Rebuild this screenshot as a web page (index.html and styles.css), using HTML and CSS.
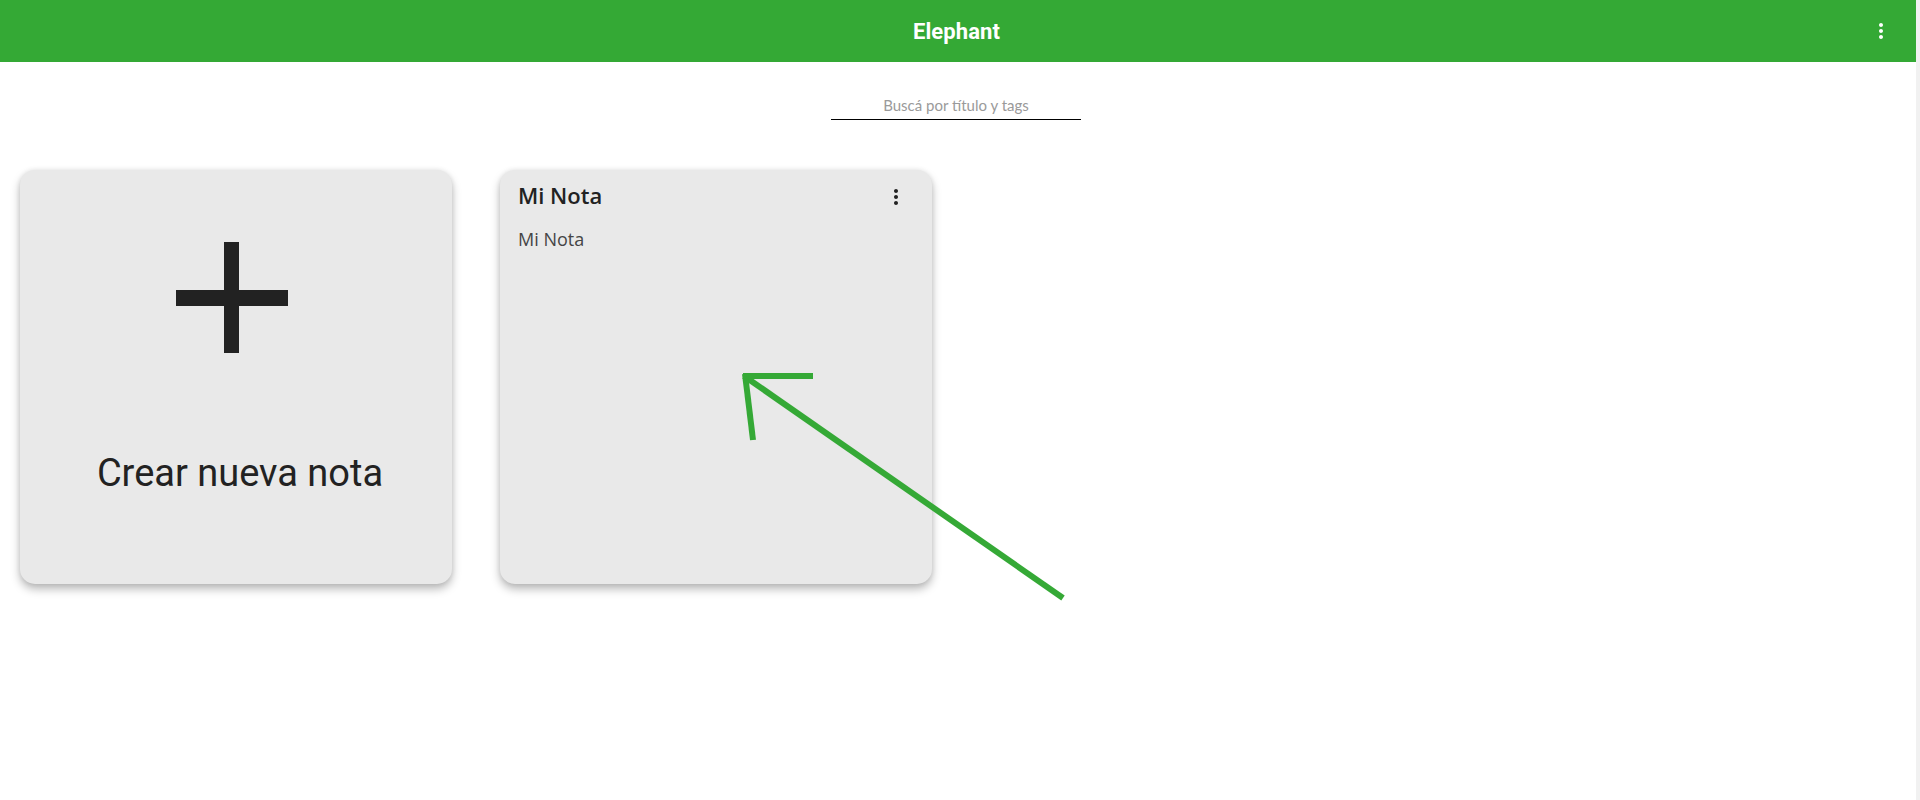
FILE: index.html
```html
<!DOCTYPE html>
<html lang="es">
<head>
<meta charset="utf-8">
<title>Elephant</title>
<link rel="stylesheet" href="styles.css">
</head>
<body>
<div class="app">
  <header class="topbar">
    <div class="topbar-title">Elephant</div>
    <button class="icon-btn topbar-menu" aria-label="Menú">
      <svg viewBox="0 0 24 24" width="24" height="24"><path fill="currentColor" d="M12 8c1.1 0 2-.9 2-2s-.9-2-2-2-2 .9-2 2 .9 2 2 2zm0 2c-1.1 0-2 .9-2 2s.9 2 2 2 2-.9 2-2-.9-2-2-2zm0 6c-1.1 0-2 .9-2 2s.9 2 2 2 2-.9 2-2-.9-2-2-2z"/></svg>
    </button>
  </header>

  <main class="content">
    <div class="search">
      <input class="search-input" type="text" placeholder="Buscá por título y tags">
    </div>

    <section class="notes">
      <div class="card card-new">
        <svg class="plus" viewBox="0 0 112 111" width="112" height="111">
          <rect x="48" y="0" width="15" height="111" fill="#222"/>
          <rect x="0" y="48" width="112" height="16" fill="#222"/>
        </svg>
        <div class="new-label">Crear nueva nota</div>
      </div>

      <div class="card card-note">
        <div class="note-head">
          <div class="note-title">Mi Nota</div>
          <button class="icon-btn note-menu" aria-label="Opciones">
            <svg viewBox="0 0 24 24" width="24" height="24"><path fill="currentColor" d="M12 8c1.1 0 2-.9 2-2s-.9-2-2-2-2 .9-2 2 .9 2 2 2zm0 2c-1.1 0-2 .9-2 2s.9 2 2 2 2-.9 2-2-.9-2-2-2zm0 6c-1.1 0-2 .9-2 2s.9 2 2 2 2-.9 2-2-.9-2-2-2z"/></svg>
          </button>
        </div>
        <div class="note-body">Mi Nota</div>
      </div>
    </section>
  </main>

  <svg class="annotation" viewBox="0 0 1916 800" width="1916" height="800">
    <g stroke="#35a936" stroke-width="6" fill="none" stroke-linecap="butt">
      <line x1="744" y1="376" x2="1063" y2="598"/>
      <line x1="743" y1="376" x2="813" y2="376"/>
      <line x1="745" y1="374" x2="753" y2="440"/>
    </g>
  </svg>
</div>
</body>
</html>
```

FILE: styles.css
```css
html {
  background: #f1f1f1;
}

body {
  margin: 0 4px 0 0;
  background: #ffffff;
  min-height: 100vh;
  font-family: "Open Sans", "Noto Sans", sans-serif;
}

.app {
  position: relative;
  min-height: 800px;
}

.topbar {
  height: 62px;
  background: #34a935;
  display: flex;
  align-items: center;
  justify-content: center;
  position: relative;
  padding-right: 3px;
}

.topbar-title {
  font-family: Roboto, "Liberation Sans", sans-serif;
  font-weight: 700;
  font-size: 22px;
  color: #ffffff;
  letter-spacing: 0.1px;
}

.icon-btn {
  border: 0;
  background: transparent;
  padding: 0;
  margin: 0;
  width: 24px;
  height: 24px;
  display: flex;
  cursor: pointer;
}

.topbar-menu {
  position: absolute;
  right: 23px;
  top: 19px;
  color: #ffffff;
}

.content {
  display: flex;
  flex-direction: column;
}

.search {
  display: flex;
  justify-content: center;
  margin-top: 28px;
  padding-right: 4px;
}

.search-input {
  width: 250px;
  height: 30px;
  box-sizing: border-box;
  border: 0;
  border-bottom: 1px solid #000;
  outline: none;
  background: transparent;
  text-align: center;
  font-family: Lato, "Open Sans", sans-serif;
  font-size: 15px;
  padding: 0;
  color: #333;
}

.search-input::placeholder {
  color: #9a9a9a;
}

.notes {
  display: flex;
  gap: 48px;
  padding: 50px 20px 0 20px;
}

.card {
  width: 432px;
  height: 414px;
  box-sizing: border-box;
  background: #e9e9e9;
  border-radius: 15px;
  box-shadow: 0 5px 10px rgba(0, 0, 0, 0.28), 0 0 5px rgba(0, 0, 0, 0.08);
}

.card-new {
  display: flex;
  flex-direction: column;
  align-items: center;
  padding-top: 72px;
}

.plus {
  display: block;
  margin-right: 8px;
}

.new-label {
  margin-top: 98px;
  font-family: Roboto, "Liberation Sans", sans-serif;
  font-size: 38px;
  line-height: 45px;
  color: #222222;
  padding-left: 8px;
}

.card-note {
  padding: 10px 24px 0 18px;
  display: flex;
  flex-direction: column;
}

.note-head {
  display: flex;
  justify-content: space-between;
  align-items: flex-start;
}

.note-title {
  font-family: "Open Sans", sans-serif;
  font-weight: 600;
  font-size: 22px;
  line-height: 30px;
  color: #222222;
}

.note-menu {
  margin-top: 5px;
  color: #222222;
}

.note-body {
  margin-top: 17px;
  font-family: "Open Sans", sans-serif;
  font-size: 18px;
  line-height: 24px;
  color: #454545;
}

.annotation {
  position: absolute;
  left: 0;
  top: 0;
  pointer-events: none;
}
```
